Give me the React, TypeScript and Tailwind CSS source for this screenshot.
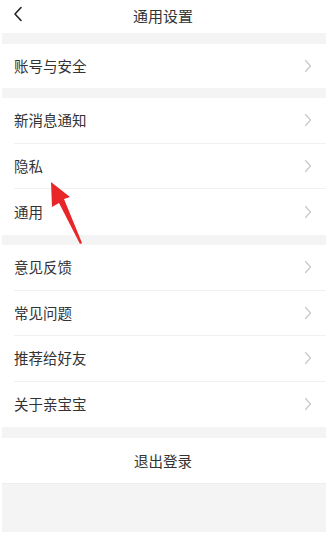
import React from "react";

const font = { fontFamily: '"Noto Sans CJK SC", "Noto Sans", sans-serif' };

function Chevron() {
  return (
    <svg width="8" height="14" viewBox="0 0 8 14" fill="none" className="shrink-0">
      <path d="M1.5 1.5 L6.5 7 L1.5 12.5" stroke="#c8c8c8" strokeWidth="1.2" strokeLinecap="round" strokeLinejoin="round" />
    </svg>
  );
}

function Row({ label, last, h = "h-[45.5px]" }: { label: string; last?: boolean; h?: string }) {
  return (
    <div className={`flex ${h} items-center pl-[14px] bg-white`}>
      <div
        className={`flex h-full flex-1 items-center justify-between pr-[14px] ${last ? "" : "border-b border-[#f0f0f0]"}`}
      >
        <span className="text-[14.5px] text-[#333]">{label}</span>
        <Chevron />
      </div>
    </div>
  );
}

function Gap({ h }: { h: string }) {
  return <div className={`${h} ml-[2px] bg-[#f4f4f4]`} />;
}

export default function App() {
  return (
    <div className="relative h-[533px] w-[326px] overflow-hidden bg-white" style={font}>
      <header className="relative flex h-[33px] items-center justify-center bg-white">
        <svg width="10" height="16" viewBox="0 0 10 16" className="absolute left-[13px] top-[6px]" fill="none">
          <path d="M8 1.5 L2 8 L8 14.5" stroke="#222" strokeWidth="1.6" strokeLinecap="round" strokeLinejoin="round" />
        </svg>
        <h1 className="text-[15px] text-[#333]">通用设置</h1>
      </header>
      <Gap h="h-[11px]" />
      <Row label="账号与安全" last h="h-[44px]" />
      <Gap h="h-[10px]" />
      <Row label="新消息通知" />
      <Row label="隐私" />
      <Row label="通用" last />
      <Gap h="h-[10.5px]" />
      <Row label="意见反馈" />
      <Row label="常见问题" />
      <Row label="推荐给好友" />
      <Row label="关于亲宝宝" last />
      <Gap h="h-[11px]" />
      <div className="flex h-[45px] items-center justify-center bg-white">
        <span className="text-[14.5px] text-[#333]">退出登录</span>
      </div>
      <div className="ml-[2px] h-[49px] border-t border-[#eeeeee] bg-[#f4f4f4]" />

      <svg className="pointer-events-none absolute left-0 top-0" width="326" height="533" viewBox="0 0 326 533">
        <polygon points="51,182 70,197 64,199 82,243 80,244 59,203 52,207" fill="#e8262a" />
      </svg>
    </div>
  );
}
